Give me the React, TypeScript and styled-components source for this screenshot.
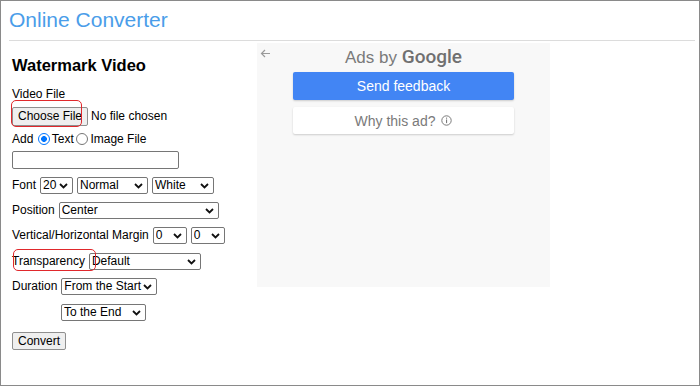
import React from "react";
import styled, { createGlobalStyle } from "styled-components";

const GlobalStyle = createGlobalStyle`
  html, body { margin: 0; padding: 0; background: #fff; }
  * { box-sizing: border-box; }
`;

const chevron = `url("data:image/svg+xml;utf8,<svg xmlns='http://www.w3.org/2000/svg' width='9' height='6' viewBox='0 0 9 6'><path d='M1 1l3.5 3.5L8 1' fill='none' stroke='%23111' stroke-width='1.8'/></svg>")`;

const Frame = styled.div`
  width: 700px;
  height: 386px;
  border: 1px solid #8a8a8a;
  background: #fff;
  font-family: "Liberation Sans", Arial, sans-serif;
  color: #000;
  overflow: hidden;
`;

const Title = styled.h1`
  margin: 7px 0 0 8px;
  font-size: 21px;
  line-height: 24px;
  font-weight: 400;
  color: #4a9de9;
`;

const Rule = styled.hr`
  margin: 8px 4px 0 8px;
  border: 0;
  height: 1px;
  background: #dcdcdc;
`;

const Main = styled.div`
  display: flex;
  align-items: flex-start;
`;

const FormColumn = styled.div`
  width: 256px;
  padding: 14px 0 0 11px;
  font-size: 12px;
`;

const Heading = styled.h2`
  margin: 0;
  font-size: 16.5px;
  line-height: 20px;
  font-weight: 700;
`;

const Label = styled.div`
  margin-top: 11px;
  line-height: 16px;
`;

const Row = styled.div<{ $mt: number; $h?: number; $indent?: number }>`
  position: relative;
  display: flex;
  align-items: center;
  gap: 4px;
  height: ${(p) => p.$h ?? 17}px;
  margin-top: ${(p) => p.$mt}px;
  padding-left: ${(p) => p.$indent ?? 0}px;
  line-height: 17px;
  white-space: nowrap;
`;

const PlainButton = styled.button`
  height: 19px;
  padding: 0 5px;
  border: 1px solid #8f8f8f;
  border-radius: 2px;
  background: #efefef;
  font-family: "Liberation Sans", Arial, sans-serif;
  font-size: 12px;
  color: #000;
  line-height: 17px;
`;

const ConvertButton = styled(PlainButton)`
  height: 18px;
  margin-top: 11px;
  display: block;
`;

const NoFile = styled.span`
  margin-left: -1px;
`;

const Mark = styled.span<{ $l: number; $t: number; $w: number; $h: number }>`
  position: absolute;
  left: ${(p) => p.$l}px;
  top: ${(p) => p.$t}px;
  width: ${(p) => p.$w}px;
  height: ${(p) => p.$h}px;
  border: 1.5px solid #e0282c;
  border-radius: 5px;
  pointer-events: none;
`;

const Radio = styled.input.attrs({ type: "radio" })<{ $ml: number }>`
  appearance: none;
  width: 12px;
  height: 12px;
  margin: 0 2px 0 ${(p) => p.$ml}px;
  border: 1px solid #767676;
  border-radius: 50%;
  background: #fff;
  &:checked {
    border: 1.5px solid #0075ff;
    background: radial-gradient(circle, #0075ff 0 2.6px, #fff 3.2px);
  }
`;

const RadioRow = styled(Row)`
  gap: 0;
`;

const TextBox = styled.input`
  display: block;
  width: 167px;
  height: 18px;
  margin-top: 4px;
  border: 1px solid #767676;
  border-radius: 2px;
  padding: 0 3px;
  font-family: "Liberation Sans", Arial, sans-serif;
  font-size: 12px;
`;

const Select = styled.select<{ $w: number }>`
  appearance: none;
  width: ${(p) => p.$w}px;
  height: 17px;
  padding: 0 12px 0 2px;
  border: 1px solid #767676;
  border-radius: 2px;
  background: #fff ${chevron} no-repeat right 4px center;
  font-family: "Liberation Sans", Arial, sans-serif;
  font-size: 12px;
  line-height: 15px;
  color: #000;
`;

const Ad = styled.div`
  width: 293px;
  height: 244px;
  margin-top: 2px;
  background: #f8f8f8;
  display: flex;
  flex-direction: column;
  align-items: center;
  font-family: "Liberation Sans", Arial, sans-serif;
`;

const AdHeader = styled.div`
  position: relative;
  align-self: stretch;
  margin-top: 4px;
  height: 20px;
  text-align: center;
  font-size: 17px;
  line-height: 20px;
  color: #7a7a7a;
`;

const Back = styled.svg`
  position: absolute;
  left: 3px;
  top: 2px;
`;

const GoogleWord = styled.span`
  font-family: Roboto, "Liberation Sans", Arial, sans-serif;
  font-size: 19px;
  font-weight: 500;
  color: #707070;
`;

const AdButton = styled.div<{ $primary?: boolean }>`
  width: 221px;
  height: ${(p) => (p.$primary ? 28 : 27)}px;
  margin-top: ${(p) => (p.$primary ? 5 : 7)}px;
  display: flex;
  align-items: center;
  justify-content: center;
  gap: 6px;
  border-radius: 2px;
  font-size: 14px;
  background: ${(p) => (p.$primary ? "#4285f4" : "#fff")};
  color: ${(p) => (p.$primary ? "#fff" : "#7a7a7a")};
  box-shadow: 0 1px 2px rgba(0, 0, 0, 0.18);
`;

export default function App() {
  return (
    <Frame>
      <GlobalStyle />
      <Title>Online Converter</Title>
      <Rule />
      <Main>
        <FormColumn>
          <Heading>Watermark Video</Heading>
          <Label>Video File</Label>
          <Row $mt={5} $h={19}>
            <PlainButton>Choose File</PlainButton>
            <NoFile>No file chosen</NoFile>
            <Mark $l={-1} $t={-7} $w={71} $h={27} />
          </Row>
          <RadioRow $mt={5} $h={16}>
            <span>Add</span>
            <Radio name="kind" $ml={4.5} defaultChecked />
            <span>Text</span>
            <Radio name="kind" $ml={2.5} />
            <span>Image File</span>
          </RadioRow>
          <TextBox />
          <Row $mt={8}>
            <span>Font</span>
            <Select $w={33} defaultValue="20">
              <option>20</option>
            </Select>
            <Select $w={71} defaultValue="Normal">
              <option>Normal</option>
            </Select>
            <Select $w={62} defaultValue="White">
              <option>White</option>
            </Select>
          </Row>
          <Row $mt={8}>
            <span>Position</span>
            <Select $w={160} defaultValue="Center">
              <option>Center</option>
            </Select>
          </Row>
          <Row $mt={8}>
            <span>Vertical/Horizontal Margin</span>
            <Select $w={34} defaultValue="0">
              <option>0</option>
            </Select>
            <Select $w={34} defaultValue="0">
              <option>0</option>
            </Select>
          </Row>
          <Row $mt={9}>
            <span>Transparency</span>
            <Select $w={112} defaultValue="Default">
              <option>Default</option>
            </Select>
            <Mark $l={1} $t={-4} $w={83} $h={22} />
          </Row>
          <Row $mt={8}>
            <span>Duration</span>
            <Select $w={96} defaultValue="From the Start">
              <option>From the Start</option>
            </Select>
          </Row>
          <Row $mt={9} $indent={49}>
            <Select $w={85} defaultValue="To the End">
              <option>To the End</option>
            </Select>
          </Row>
          <ConvertButton>Convert</ConvertButton>
        </FormColumn>
        <Ad>
          <AdHeader>
            <Back width="11" height="9" viewBox="0 0 11 9">
              <path d="M10 4.5H1.5M5 1L1.5 4.5 5 8" fill="none" stroke="#9a9a9a" strokeWidth="1.2" />
            </Back>
            Ads by <GoogleWord>Google</GoogleWord>
          </AdHeader>
          <AdButton $primary>Send feedback</AdButton>
          <AdButton>
            Why this ad?
            <svg width="11" height="11" viewBox="0 0 11 11">
              <circle cx="5.5" cy="5.5" r="4.7" fill="none" stroke="#7a7a7a" strokeWidth="1" />
              <rect x="5" y="4.5" width="1.1" height="3.6" fill="#7a7a7a" />
              <rect x="5" y="2.6" width="1.1" height="1.1" fill="#7a7a7a" />
            </svg>
          </AdButton>
        </Ad>
      </Main>
    </Frame>
  );
}
